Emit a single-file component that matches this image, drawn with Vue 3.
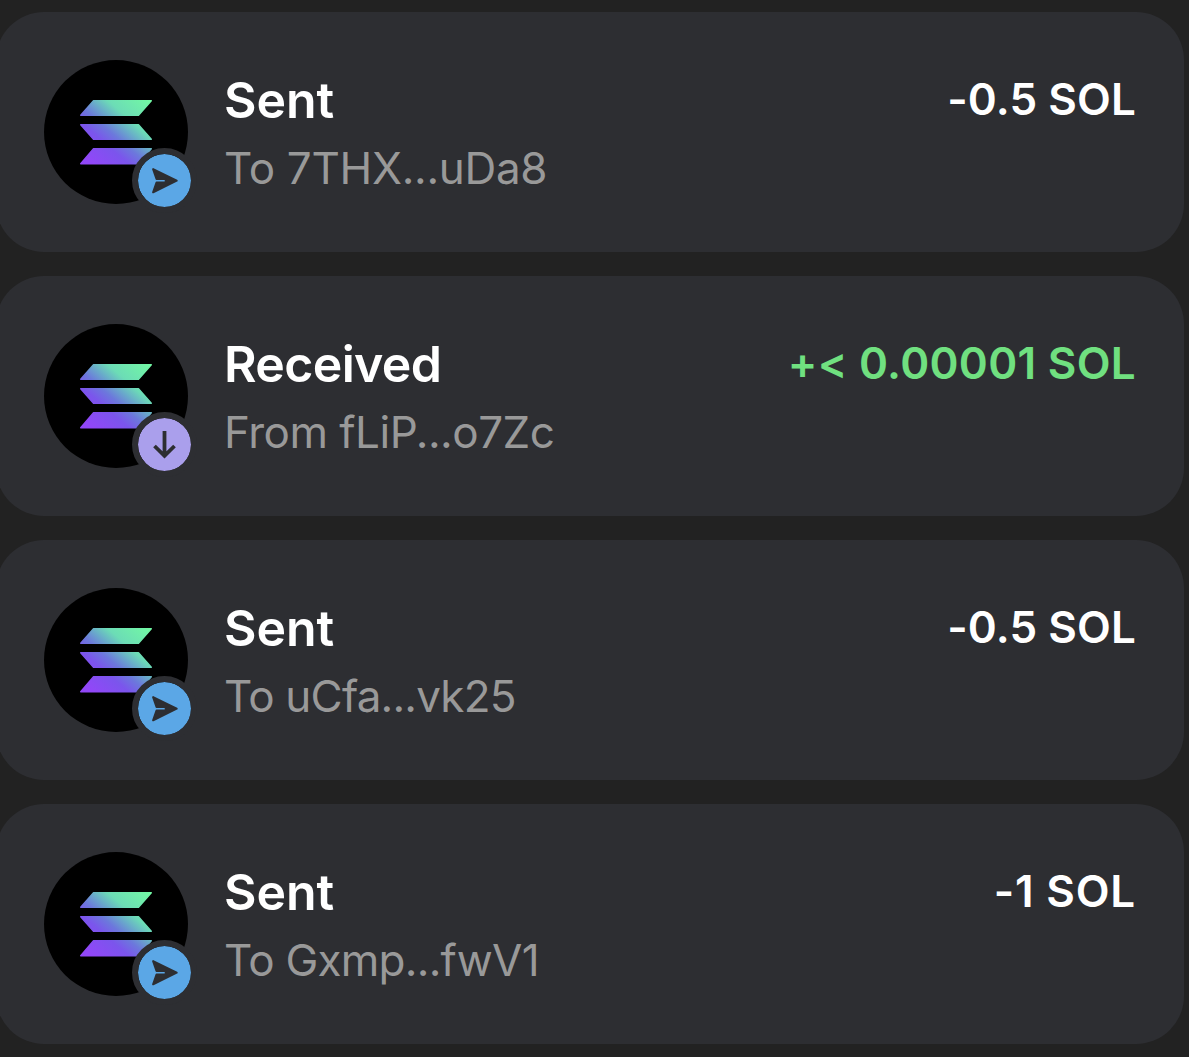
<script setup>
const transactions = [
  { id: 1, type: 'sent', title: 'Sent', address: 'To 7THX...uDa8', amount: '-0.5 SOL' },
  { id: 2, type: 'received', title: 'Received', address: 'From fLiP...o7Zc', amount: '+< 0.00001 SOL' },
  { id: 3, type: 'sent', title: 'Sent', address: 'To uCfa...vk25', amount: '-0.5 SOL' },
  { id: 4, type: 'sent', title: 'Sent', address: 'To Gxmp...fwV1', amount: '-1 SOL' }
]
</script>

<template>
  <div class="activity">
    <div v-for="tx in transactions" :key="tx.id" class="card" :class="tx.type">
      <div class="avatar">
        <svg class="token" viewBox="0 0 144 144">
          <defs>
            <linearGradient :id="'sol-' + tx.id" gradientUnits="userSpaceOnUse" x1="42" y1="107" x2="102" y2="37">
              <stop offset="0.08" stop-color="#9147f8" />
              <stop offset="0.33" stop-color="#7b55ec" />
              <stop offset="0.46" stop-color="#6c78dc" />
              <stop offset="0.58" stop-color="#69abca" />
              <stop offset="0.7" stop-color="#6cdcb6" />
              <stop offset="1" stop-color="#72f8a4" />
            </linearGradient>
          </defs>
          <g :fill="'url(#sol-' + tx.id + ')'" :stroke="'url(#sol-' + tx.id + ')'" stroke-width="1.4" stroke-linejoin="round">
            <path d="M49.5 40.7H107.3L94.5 55.3H36.7Z" />
            <path d="M36.7 64.7H94.5L107.3 79.3H49.5Z" />
            <path d="M49.5 88.7H107.3L94.5 103.8H36.7Z" />
          </g>
        </svg>
        <div class="badge">
          <svg v-if="tx.type === 'sent'" viewBox="-26.5 -26.5 53 53">
            <path class="plane" d="M-11.4 -11.4L12.2 0.2L-11.4 11.8L-8 2H1.2V-1.6H-8Z" />
          </svg>
          <svg v-else viewBox="-26.5 -26.5 53 53">
            <path class="arrow" d="M0 -13.5V11M-10 1.5L0 11.3L10 1.5" />
          </svg>
        </div>
      </div>
      <div class="details">
        <div class="title">{{ tx.title }}</div>
        <div class="address">{{ tx.address }}</div>
      </div>
      <div class="amount">{{ tx.amount }}</div>
    </div>
  </div>
</template>

<style>
body {
  background-color: #222222;
  overflow: hidden;
}
</style>

<style scoped>
.activity {
  display: flex;
  flex-direction: column;
  gap: 24px;
  height: 1057px;
  box-sizing: border-box;
  padding: 12px 5px 0 0;
  margin-left: -4px;
  overflow: hidden;
  background-color: #222222;
  font-family: Inter, 'Liberation Sans', sans-serif;
}

.card {
  display: flex;
  align-items: flex-start;
  flex-shrink: 0;
  height: 240px;
  box-sizing: border-box;
  padding: 48px;
  border-radius: 48px;
  background-color: #2d2e32;
}

.avatar {
  position: relative;
  flex-shrink: 0;
  width: 144px;
  height: 144px;
  border-radius: 50%;
  background-color: #000000;
}

.token {
  display: block;
  width: 144px;
  height: 144px;
}

.badge {
  position: absolute;
  right: -9px;
  bottom: -9px;
  width: 53px;
  height: 53px;
  border: 6px solid #2d2e32;
  border-radius: 50%;
  background-color: #5ba7e6;
  background-clip: padding-box;
}

.received .badge {
  background-color: #aa9fec;
}

.badge svg {
  display: block;
  width: 53px;
  height: 53px;
}

.plane {
  fill: #2d2e32;
  stroke: #2d2e32;
  stroke-width: 2;
  stroke-linejoin: round;
}

.arrow {
  fill: none;
  stroke: #2d2e32;
  stroke-width: 3.8;
}

.details {
  flex: 1;
  padding: 8px 0 0 36px;
  white-space: nowrap;
}

.title {
  font-size: 50px;
  font-weight: 600;
  line-height: 64px;
  letter-spacing: -0.1px;
  color: #ffffff;
}

.received .title {
  letter-spacing: -0.65px;
}

.address {
  margin-top: 8px;
  font-size: 44px;
  line-height: 56px;
  letter-spacing: -0.3px;
  color: #999999;
}

.card:nth-child(2) .address {
  letter-spacing: -0.5px;
}

.card:nth-child(3) .address {
  letter-spacing: -0.8px;
}

.card:nth-child(4) .address {
  letter-spacing: -0.75px;
}

.amount {
  padding-top: 11px;
  font-size: 44px;
  font-weight: 570;
  line-height: 56px;
  letter-spacing: 0.1px;
  white-space: nowrap;
  color: #ffffff;
}

.card:nth-child(4) .amount {
  letter-spacing: 0.8px;
}

.received .amount {
  font-feature-settings: 'calt' 0;
  letter-spacing: 0.3px;
  color: #70e080;
}
</style>
